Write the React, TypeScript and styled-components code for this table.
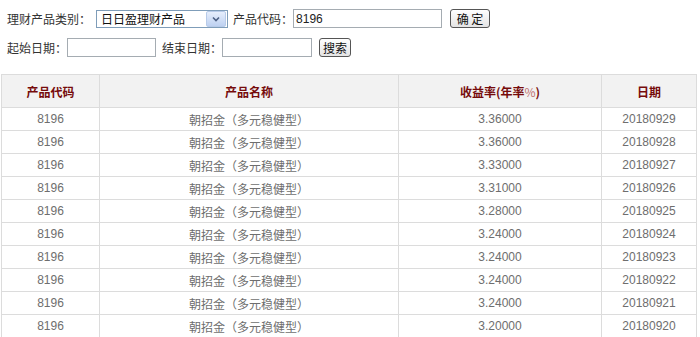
import React from 'react';
import styled, { createGlobalStyle } from 'styled-components';

const GlobalStyle = createGlobalStyle`
    body {
        margin: 0;
        background: #fff;
        font-family: "Liberation Sans", "Noto Sans CJK SC", sans-serif;
        font-size: 12px;
    }
`;

const Page = styled.div`
    width: 700px;
    padding-top: 9px;
`;

const Form = styled.div`
    display: flex;
    flex-direction: column;
    gap: 10px;
    padding-left: 7px;
`;

const FormRow = styled.div`
    display: flex;
    align-items: center;
    height: 19px;
`;

const Label = styled.span<{ gap?: number }>`
    color: #333;
    font-size: 12px;
    margin-left: ${props => props.gap || 0}px;
    white-space: nowrap;
`;

const SelectBox = styled.div`
    display: flex;
    align-items: center;
    justify-content: space-between;
    box-sizing: border-box;
    width: 132px;
    height: 18px;
    border: 1px solid #7f9db9;
    margin: 0 5px;
    padding-left: 4px;
    color: #111;
    background: #fff;
`;

const SelectArrow = styled.span`
    display: flex;
    align-items: center;
    justify-content: center;
    width: 18px;
    height: 14px;
    margin-right: 1px;
    background: linear-gradient(#e6eefc, #bed1f1);
    border: 1px solid #b8cbe9;
    border-radius: 2px;
`;

const TextInput = styled.input<{ w: number }>`
    box-sizing: border-box;
    width: ${props => props.w}px;
    height: 19px;
    border: 1px solid #a5acb2;
    padding: 0 2px;
    font-family: "Liberation Sans", sans-serif;
    font-size: 12px;
    color: #222;
    outline: none;
`;

const Button = styled.button<{ gap: number; w: number }>`
    box-sizing: border-box;
    width: ${props => props.w}px;
    height: 19px;
    margin-left: ${props => props.gap}px;
    padding: 0;
    border: 1px solid #555;
    border-radius: 3px;
    background: linear-gradient(#ffffff, #e4e4e4);
    font-family: "Noto Sans CJK SC", sans-serif;
    font-size: 12px;
    line-height: 17px;
    color: #111;
    white-space: pre;
`;

const Table = styled.table`
    margin: 17px 0 0 1px;
    width: 691px;
    border-collapse: collapse;
    table-layout: fixed;
`;

const Th = styled.th<{ w: number }>`
    width: ${props => props.w}px;
    height: 32px;
    padding: 0;
    border: 1px solid #dcdcdc;
    background: #f2f2f2;
    color: #760b0b;
    font-family: "Noto Sans CJK SC", sans-serif;
    font-size: 12px;
    font-weight: bold;
`;

const Light = styled.span`
    color: #c07070;
    font-weight: normal;
`;

const Td = styled.td`
    height: 22px;
    padding: 0;
    border: 1px solid #dcdcdc;
    text-align: center;
    color: #6e6e6e;
    font-size: 12px;
`;

const rows = [
    ['3.36000', '20180929'],
    ['3.36000', '20180928'],
    ['3.33000', '20180927'],
    ['3.31000', '20180926'],
    ['3.28000', '20180925'],
    ['3.24000', '20180924'],
    ['3.24000', '20180923'],
    ['3.24000', '20180922'],
    ['3.24000', '20180921'],
    ['3.20000', '20180920'],
];

const App: React.FC = () => {
    return (
        <Page>
            <GlobalStyle />
            <Form>
                <FormRow>
                    <Label>理财产品类别：</Label>
                    <SelectBox>
                        <span>日日盈理财产品</span>
                        <SelectArrow>
                            <svg width="8" height="6" viewBox="0 0 8 6">
                                <path d="M1 1.5 L4 4.5 L7 1.5" fill="none" stroke="#4d6185" strokeWidth="1.6" />
                            </svg>
                        </SelectArrow>
                    </SelectBox>
                    <Label>产品代码：</Label>
                    <TextInput w={149} defaultValue="8196" />
                    <Button gap={8} w={40}>确 定</Button>
                </FormRow>
                <FormRow>
                    <Label>起始日期：</Label>
                    <TextInput w={89} />
                    <Label gap={6}>结束日期：</Label>
                    <TextInput w={90} />
                    <Button gap={7} w={32}>搜索</Button>
                </FormRow>
            </Form>
            <Table>
                <thead>
                    <tr>
                        <Th w={97}>产品代码</Th>
                        <Th w={298}>产品名称</Th>
                        <Th w={202}>收益率(年率<Light>%</Light>)</Th>
                        <Th w={94}>日期</Th>
                    </tr>
                </thead>
                <tbody>
                    {
                        rows.map(([rate, date], i) =>
                            <tr key={i}>
                                <Td>8196</Td>
                                <Td>朝招金（多元稳健型）</Td>
                                <Td>{rate}</Td>
                                <Td>{date}</Td>
                            </tr>
                        )
                    }
                </tbody>
            </Table>
        </Page>
    );
};

export default App;
